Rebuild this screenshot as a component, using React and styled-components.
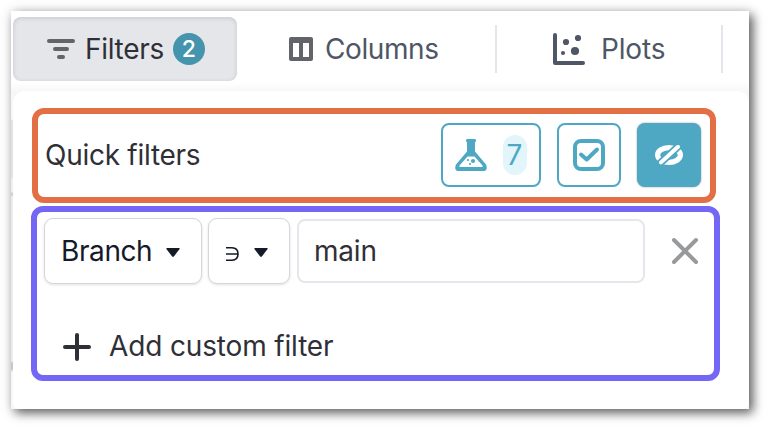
import React from "react";
import styled, { createGlobalStyle, css } from "styled-components";

const GlobalStyle = createGlobalStyle`
  *, *::before, *::after { box-sizing: border-box; }
  body {
    margin: 0;
    background: #fff;
    font-family: Inter, "Liberation Sans", sans-serif;
    font-size: 28px;
    line-height: 34px;
    color: #2f3037;
    overflow: hidden;
  }
  button, input { font: inherit; letter-spacing: inherit; }
  svg { display: block; flex: none; }
`;

const Page = styled.div`
  height: 428px;
  padding: 11px 19px 19px 11px;
`;

const Window = styled.div`
  width: 738px;
  height: 398px;
  display: flex;
  flex-direction: column;
  background: #fff;
  box-shadow: 4px 4px 10px rgba(0, 0, 0, 0.6), 0 0 12px rgba(0, 0, 0, 0.12);
`;

const Toolbar = styled.nav`
  height: 80px;
  flex: none;
  display: flex;
  align-items: flex-start;
  padding: 6px 0 0 2px;
  background: linear-gradient(#fff 71px, #f8f8f8 80px);
`;

const Tab = styled.button`
  width: ${(p) => p.$width}px;
  height: 64px;
  flex: none;
  display: flex;
  align-items: center;
  padding: 0 0 0 ${(p) => p.$inset}px;
  border: 0;
  border-radius: 8px;
  background: transparent;
  color: #4f5665;
  ${(p) =>
    p.$active &&
    css`
      color: #2f3037;
      background: #e5e6ea;
      box-shadow: inset 0 1px 4px rgba(70, 70, 100, 0.2);
    `}
`;

const Label = styled.span`
  white-space: nowrap;
  margin-left: ${(p) => p.$gap || 0}px;
  letter-spacing: ${(p) => p.$track || 0}px;
`;

const Count = styled.span`
  width: 32px;
  height: 32px;
  margin-left: 9px;
  display: flex;
  align-items: center;
  justify-content: center;
  border-radius: 50%;
  background: #4594ad;
  color: #fff;
  font-size: 23px;
  font-weight: 500;
`;

const Divider = styled.span`
  width: 2px;
  height: 48px;
  margin-top: 8px;
  flex: none;
  background: #e5e6ec;
`;

const Body = styled.div`
  flex: 1;
  display: flex;
  padding-left: 2px;
  background: linear-gradient(#f7f7f7 28px, #e1e1e6 30px 86px, #f0f0f2 88px 101px, #cfcfd4 102px 104px, #ececef 106px 270px, #c6c6ce 272px 278px, #f7f7f7 281px);
`;

const Panel = styled.section`
  flex: 1;
  display: flex;
  flex-direction: column;
  padding: 17px 0 0 18px;
  border-radius: 12px 12px 6px 6px;
  background: #fff;
`;

const QuickFilters = styled.div`
  width: 684px;
  height: 95px;
  margin-left: 1px;
  display: flex;
  align-items: center;
  justify-content: space-between;
  padding: 0 9px 1px 7px;
  border: 6px solid #e37045;
  border-radius: 12px;
`;

const ButtonGroup = styled.div`
  display: flex;
  gap: 16px;
`;

const QuickButton = styled.button`
  width: ${(p) => p.$width || 64}px;
  height: 64px;
  display: flex;
  align-items: center;
  justify-content: center;
  gap: 16px;
  padding: 0;
  border: 2px solid #4fa8c3;
  border-radius: 8px;
  background: ${(p) => (p.$filled ? "#4fa8c3" : "#fff")};
  box-shadow: ${(p) => (p.$filled ? "0 0 2px rgba(0, 0, 0, 0.4)" : "none")};
  color: ${(p) => (p.$filled ? "#fff" : "#4fa8c3")};
`;

const Pill = styled.span`
  width: 24px;
  height: 40px;
  display: flex;
  align-items: center;
  justify-content: center;
  padding-right: 1px;
  border-radius: 12px;
  background: #e2f5fb;
`;

const CustomFilters = styled.div`
  width: 689px;
  height: 175px;
  margin-top: 3px;
  padding: 6px 0 0 7px;
  border: 6px solid #7567f5;
  border-radius: 12px;
`;

const FilterRow = styled.div`
  display: flex;
  align-items: center;
`;

const SelectButton = styled.button`
  width: ${(p) => p.$width}px;
  height: 66px;
  margin-right: 6px;
  flex: none;
  display: flex;
  align-items: center;
  justify-content: space-between;
  padding: 0 ${(p) => p.$right}px 0 16px;
  border: 1px solid #d6d6d8;
  border-radius: 9px;
  background: #fff;
  box-shadow: 0 1px 3px rgba(0, 0, 0, 0.12);
  color: #151a29;
`;

const ValueInput = styled.input`
  width: 348px;
  height: 64px;
  margin-left: 1px;
  padding: 0 0 0 15px;
  border: 2px solid #e6e6ec;
  border-radius: 8px;
  background: #fff;
  color: #2f3037;
  letter-spacing: -0.2px;
  outline: none;
`;

const ClearButton = styled.button`
  margin-left: 26px;
  padding: 0;
  border: 0;
  background: none;
  color: #98999b;
`;

const AddButton = styled.button`
  height: 40px;
  margin: 43px 0 0 19px;
  display: flex;
  align-items: center;
  padding: 0;
  border: 0;
  background: none;
  color: #2f3037;

  ${Label} {
    padding-bottom: 3px;
  }
`;

const FilterIcon = () => (
  <svg width="28" height="20" viewBox="0 0 28 20" stroke="#63646a" strokeWidth="4" strokeLinecap="round">
    <path d="M2 2H26M8 10H20M12 18H16" />
  </svg>
);

const ColumnsIcon = () => (
  <svg width="24" height="24" viewBox="0 0 24 24">
    <path fill="#636469" fillRule="evenodd" d="M2 0H22Q24 0 24 2V22Q24 24 22 24H2Q0 24 0 22V2Q0 0 2 0ZM4 6V20H10V6ZM14 6V20H20V6Z" />
  </svg>
);

const PlotsIcon = () => (
  <svg width="32" height="32" viewBox="0 0 32 32" fill="#4f5665">
    <path d="M2 2V30H30" fill="none" stroke="#4f5665" strokeWidth="4" strokeLinecap="round" strokeLinejoin="round" />
    <circle cx="13" cy="9" r="3.1" />
    <circle cx="25" cy="5" r="3.1" />
    <circle cx="10" cy="20" r="2.1" />
    <circle cx="22" cy="18" r="4.1" />
  </svg>
);

const FlaskIcon = () => (
  <svg width="32" height="32" viewBox="0 0 32 32" fill="currentColor">
    <path fillRule="evenodd" d="M12 0H20Q21 0 21 1.5Q21 3 20 3V12.5L31 25.5Q33.5 32 28 32H4Q-1.5 32 1 25.5L12 12.5V3Q11 3 11 1.5Q11 0 12 0ZM12.5 17.5L4.5 26.5Q4 28 5.5 28H26.5Q28 28 27.5 26.5L19.5 17.5Z" />
    <circle cx="13" cy="21" r="1.1" />
    <circle cx="18" cy="22" r="2.1" />
    <circle cx="15" cy="25" r="1.1" />
  </svg>
);

const CheckIcon = () => (
  <svg width="32" height="32" viewBox="0 0 32 32" fill="none" stroke="currentColor" strokeWidth="4" strokeLinecap="round" strokeLinejoin="round">
    <rect x="2" y="2" width="28" height="28" rx="6" />
    <path d="M8 15.5L13.7 20.5L24 10.5" />
  </svg>
);

const HiddenIcon = () => (
  <svg width="28" height="20" viewBox="0 0 28 20" fill="none" stroke="currentColor" strokeWidth="4" strokeLinecap="round">
    <ellipse cx="14" cy="10" rx="11.4" ry="7.4" strokeWidth="5.2" />
    <path stroke="#4fa8c3" strokeWidth="7.6" strokeLinecap="butt" d="M2 21L26.5 -1.5" />
    <path d="M6 17.4L23 1.8" />
  </svg>
);

const CaretIcon = () => (
  <svg width="14" height="11" viewBox="0 -2 14 11" fill="#151a29">
    <path d="M1 0H13Q14.3 0 13.4 1.2L7.9 8.4Q7 9.3 6.1 8.4L0.6 1.2Q-0.3 0 1 0Z" />
  </svg>
);

const ContainsIcon = () => (
  <svg width="14" height="20" viewBox="0 0 14 20" fill="none" stroke="#151a29" strokeWidth="1.6">
    <path d="M1 6.8H7Q13 7 13 13Q13 19 7 19.2H1M1 13H13" />
  </svg>
);

const CloseIcon = () => (
  <svg width="28" height="28" viewBox="0 0 28 28" stroke="currentColor" strokeWidth="4" strokeLinecap="round">
    <path d="M3 3L25 25M25 3L3 25" />
  </svg>
);

const PlusIcon = () => (
  <svg width="28" height="28" viewBox="0 0 28 28" stroke="currentColor" strokeWidth="4" strokeLinecap="round">
    <path d="M14 2V26M2 14H26" />
  </svg>
);

export default function App() {
  return (
    <Page>
      <GlobalStyle />
      <Window>
        <Toolbar>
          <Tab $active $width={224} $inset={34}>
            <FilterIcon />
            <Label $gap={10} $track={-0.3}>Filters</Label>
            <Count>2</Count>
          </Tab>
          <Tab $width={258} $inset={52}>
            <ColumnsIcon />
            <Label $gap={12} $track={-0.4}>Columns</Label>
          </Tab>
          <Divider />
          <Tab $width={224} $inset={56}>
            <PlotsIcon />
            <Label $gap={16} $track={-0.15}>Plots</Label>
          </Tab>
          <Divider />
        </Toolbar>
        <Body>
          <Panel>
            <QuickFilters>
              <Label $track={-0.27}>Quick filters</Label>
              <ButtonGroup>
                <QuickButton $width={100}>
                  <FlaskIcon />
                  <Pill>7</Pill>
                </QuickButton>
                <QuickButton>
                  <CheckIcon />
                </QuickButton>
                <QuickButton $filled>
                  <HiddenIcon />
                </QuickButton>
              </ButtonGroup>
            </QuickFilters>
            <CustomFilters>
              <FilterRow>
                <SelectButton $width={158} $right={21}>
                  <Label $track={-0.4}>Branch</Label>
                  <CaretIcon />
                </SelectButton>
                <SelectButton $width={82} $right={21}>
                  <ContainsIcon />
                  <CaretIcon />
                </SelectButton>
                <ValueInput defaultValue="main" />
                <ClearButton>
                  <CloseIcon />
                </ClearButton>
              </FilterRow>
              <AddButton>
                <PlusIcon />
                <Label $gap={18} $track={-0.15}>Add custom filter</Label>
              </AddButton>
            </CustomFilters>
          </Panel>
        </Body>
      </Window>
    </Page>
  );
}
